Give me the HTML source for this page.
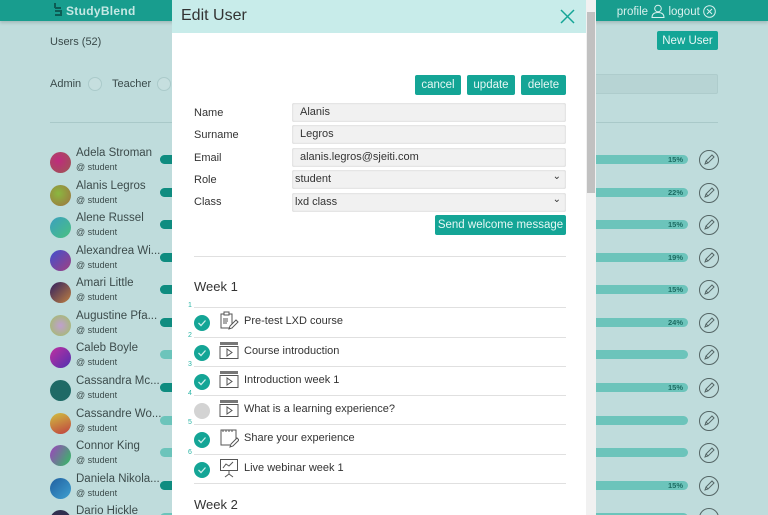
<!DOCTYPE html>
<html><head><meta charset="utf-8"><style>
*{box-sizing:border-box;margin:0;padding:0}
html,body{width:768px;height:515px;overflow:hidden}
body{background:#bfdcdc;font-family:"Liberation Sans",sans-serif;color:#3a4a4a}
#w{position:relative;width:768px;height:515px;overflow:hidden}
.hdr{position:absolute;left:0;top:0;width:768px;height:21px;background:#189d8e;box-shadow:0 2px 3px rgba(0,0,0,.15)}
.logo{position:absolute;left:66px;top:4px;color:#c5e8e4;font-weight:bold;font-size:12px;letter-spacing:.3px}
.hr{position:absolute;right:52px;top:4px;color:#d9f0ee;font-size:11.5px}
.abs{position:absolute}
.btn{background:#14a596;color:#e6f7f5;font-size:11.5px;border-radius:2px;display:flex;align-items:center;justify-content:center}
.row{position:absolute;left:50px;height:32px;width:670px}
.av{position:absolute;left:0;top:-1px;width:21px;height:21px;border-radius:50%}
.nm{position:absolute;left:26px;top:-6px;font-size:11.5px;color:#3c4b4b;white-space:nowrap}
.st{position:absolute;left:26px;top:9px;font-size:9px;color:#3c4b4b}
.bar{position:absolute;left:110px;top:2px;width:528px;height:9px;border-radius:5px;background:#6cc4bb}
.bar i{position:absolute;left:0;top:0;width:14px;height:9px;border-radius:5px 0 0 5px;background:#0f8c80}
.bar b{position:absolute;right:5px;top:0;font-size:7.5px;color:#1c6c63}
.pen{position:absolute;left:648px;top:-4px}
.modal{position:absolute;left:172px;top:0;width:414px;height:515px;background:#fff}
.mh{height:33px;background:#c8ecea;position:relative}
.mh span{position:absolute;left:9px;top:7px;font-size:16px;color:#333}
.lbl{position:absolute;left:22px;font-size:11px;color:#333}
.inp{position:absolute;left:120px;width:274px;height:19px;line-height:19px;background:#f1f1f1;border-radius:2px;box-shadow:inset 0 0 2px rgba(0,0,0,.15);font-size:11px;padding:0 8px;color:#333}
.sel{padding-left:3px}
.sel:after{content:"⌄";position:absolute;right:5px;top:-3px;font-size:10px}
.ln{position:absolute;left:22px;width:372px;height:1px;background:#e0e0e0}
.it{position:absolute;left:22px;width:372px;height:29px}
.num{position:absolute;left:-6px;top:-5px;font-size:7px;color:#2ab5a6}
.ck{position:absolute;left:0;top:8px;width:16px;height:16px;border-radius:50%;background:#14a596}
.ck.g{background:#d3d3d3}
.ic{position:absolute;left:25px;top:4px}
.tx{position:absolute;left:50px;top:8px;font-size:11px;color:#333}
</style></head><body><div id="w">
<div class="hdr"><svg class="abs" style="left:52px;top:2px" width="12" height="16"><path d="M3 1v5M3 6h6M3 9h6v4H3" stroke="#0c5c54" stroke-width="2" fill="none"/></svg><div class="logo">StudyBlend</div>
<div class="hr">profile <svg width="14" height="14" style="vertical-align:-3px"><circle cx="7" cy="4.5" r="3.3" fill="none" stroke="#d9f0ee"/><path d="M1 13.5c0-4 3-5 6-5s6 1 6 5z" fill="none" stroke="#d9f0ee"/></svg> logout <svg width="13" height="13" style="vertical-align:-3px"><circle cx="6.5" cy="6.5" r="5.8" fill="none" stroke="#d9f0ee"/><path d="M4 4l5 5M9 4l-5 5" stroke="#d9f0ee"/></svg></div></div>
<div class="abs" style="left:50px;top:36px;font-size:11px">Users (52)</div>
<div class="abs btn" style="left:657px;top:31px;width:61px;height:19px">New User</div>
<div class="abs" style="left:50px;top:78px;font-size:11px">Admin</div>
<div class="abs" style="left:88px;top:77px;width:14px;height:14px;border-radius:50%;border:1px solid #aacaca;background:#c6dfdf"></div>
<div class="abs" style="left:112px;top:78px;font-size:11px">Teacher</div>
<div class="abs" style="left:157px;top:77px;width:14px;height:14px;border-radius:50%;border:1px solid #aacaca;background:#c6dfdf"></div>
<div class="abs" style="left:586px;top:74px;width:132px;height:20px;background:#b7d4d4;border:1px solid #aecccc;border-radius:2px"></div>
<div class="abs" style="left:50px;top:122px;width:668px;height:1px;background:#a9c9c9"></div>

<div class="row" style="top:153px"><div class="av" style="background:radial-gradient(circle at 40% 40%,#c02a7e,#9a5a50)"></div><div class="nm">Adela Stroman</div><div class="st">@ student</div><div class="bar"><i></i><b>15%</b></div><svg class="pen" width="22" height="22"><circle cx="11" cy="11" r="9.5" fill="none" stroke="#566"/><path d="M7 15l1-3 6-6 2 2-6 6zM8 12l2 2" fill="none" stroke="#566"/></svg></div>
<div class="row" style="top:186px"><div class="av" style="background:radial-gradient(circle at 40% 40%,#8ab840,#a07040)"></div><div class="nm">Alanis Legros</div><div class="st">@ student</div><div class="bar"><i></i><b>22%</b></div><svg class="pen" width="22" height="22"><circle cx="11" cy="11" r="9.5" fill="none" stroke="#566"/><path d="M7 15l1-3 6-6 2 2-6 6zM8 12l2 2" fill="none" stroke="#566"/></svg></div>
<div class="row" style="top:218px"><div class="av" style="background:linear-gradient(135deg,#3aa0c0,#4ac080)"></div><div class="nm">Alene Russel</div><div class="st">@ student</div><div class="bar"><i></i><b>15%</b></div><svg class="pen" width="22" height="22"><circle cx="11" cy="11" r="9.5" fill="none" stroke="#566"/><path d="M7 15l1-3 6-6 2 2-6 6zM8 12l2 2" fill="none" stroke="#566"/></svg></div>
<div class="row" style="top:251px"><div class="av" style="background:linear-gradient(135deg,#4050d0,#a04080)"></div><div class="nm">Alexandrea Wi...</div><div class="st">@ student</div><div class="bar"><i></i><b>19%</b></div><svg class="pen" width="22" height="22"><circle cx="11" cy="11" r="9.5" fill="none" stroke="#566"/><path d="M7 15l1-3 6-6 2 2-6 6zM8 12l2 2" fill="none" stroke="#566"/></svg></div>
<div class="row" style="top:283px"><div class="av" style="background:linear-gradient(135deg,#302060,#c08040)"></div><div class="nm">Amari Little</div><div class="st">@ student</div><div class="bar"><i></i><b>15%</b></div><svg class="pen" width="22" height="22"><circle cx="11" cy="11" r="9.5" fill="none" stroke="#566"/><path d="M7 15l1-3 6-6 2 2-6 6zM8 12l2 2" fill="none" stroke="#566"/></svg></div>
<div class="row" style="top:316px"><div class="av" style="background:radial-gradient(circle,#c0a0d0,#a0c060)"></div><div class="nm">Augustine Pfa...</div><div class="st">@ student</div><div class="bar"><i></i><b>24%</b></div><svg class="pen" width="22" height="22"><circle cx="11" cy="11" r="9.5" fill="none" stroke="#566"/><path d="M7 15l1-3 6-6 2 2-6 6zM8 12l2 2" fill="none" stroke="#566"/></svg></div>
<div class="row" style="top:348px"><div class="av" style="background:linear-gradient(135deg,#c030a0,#5030b0)"></div><div class="nm">Caleb Boyle</div><div class="st">@ student</div><div class="bar"></div><svg class="pen" width="22" height="22"><circle cx="11" cy="11" r="9.5" fill="none" stroke="#566"/><path d="M7 15l1-3 6-6 2 2-6 6zM8 12l2 2" fill="none" stroke="#566"/></svg></div>
<div class="row" style="top:381px"><div class="av" style="background:#1f6a66"></div><div class="nm">Cassandra Mc...</div><div class="st">@ student</div><div class="bar"><i></i><b>15%</b></div><svg class="pen" width="22" height="22"><circle cx="11" cy="11" r="9.5" fill="none" stroke="#566"/><path d="M7 15l1-3 6-6 2 2-6 6zM8 12l2 2" fill="none" stroke="#566"/></svg></div>
<div class="row" style="top:414px"><div class="av" style="background:linear-gradient(160deg,#d0c040,#c04040)"></div><div class="nm">Cassandre Wo...</div><div class="st">@ student</div><div class="bar"></div><svg class="pen" width="22" height="22"><circle cx="11" cy="11" r="9.5" fill="none" stroke="#566"/><path d="M7 15l1-3 6-6 2 2-6 6zM8 12l2 2" fill="none" stroke="#566"/></svg></div>
<div class="row" style="top:446px"><div class="av" style="background:linear-gradient(120deg,#a040c0,#30c060)"></div><div class="nm">Connor King</div><div class="st">@ student</div><div class="bar"></div><svg class="pen" width="22" height="22"><circle cx="11" cy="11" r="9.5" fill="none" stroke="#566"/><path d="M7 15l1-3 6-6 2 2-6 6zM8 12l2 2" fill="none" stroke="#566"/></svg></div>
<div class="row" style="top:479px"><div class="av" style="background:linear-gradient(135deg,#2060a0,#40a0d0)"></div><div class="nm">Daniela Nikola...</div><div class="st">@ student</div><div class="bar"><i></i><b>15%</b></div><svg class="pen" width="22" height="22"><circle cx="11" cy="11" r="9.5" fill="none" stroke="#566"/><path d="M7 15l1-3 6-6 2 2-6 6zM8 12l2 2" fill="none" stroke="#566"/></svg></div>
<div class="row" style="top:511px"><div class="av" style="background:#303050"></div><div class="nm">Dario Hickle</div><div class="bar"></div><svg class="pen" width="22" height="22"><circle cx="11" cy="11" r="9.5" fill="none" stroke="#566"/></svg></div>

<div class="modal">
<div class="mh"><span>Edit User</span><svg class="abs" style="left:388px;top:9px" width="15" height="15"><path d="M1 1l13 13M14 1L1 14" stroke="#14a596" stroke-width="1.5"/></svg></div>
<div class="abs btn" style="left:243px;top:75px;width:46px;height:20px">cancel</div>
<div class="abs btn" style="left:295px;top:75px;width:48px;height:20px">update</div>
<div class="abs btn" style="left:349px;top:75px;width:45px;height:20px">delete</div>
<div class="lbl" style="top:107px">Name</div><div class="inp" style="top:103px">Alanis</div>
<div class="lbl" style="top:129px">Surname</div><div class="inp" style="top:125px">Legros</div>
<div class="lbl" style="top:152px">Email</div><div class="inp" style="top:148px">alanis.legros@sjeiti.com</div>
<div class="lbl" style="top:174px">Role</div><div class="inp sel" style="top:170px">student</div>
<div class="lbl" style="top:196px">Class</div><div class="inp sel" style="top:193px">lxd class</div>
<div class="abs btn" style="left:263px;top:215px;width:131px;height:20px">Send welcome message</div>
<div class="ln" style="top:256px"></div>
<div class="abs" style="left:22px;top:279px;font-size:13px;color:#333">Week 1</div>

<div class="ln" style="top:307px"></div>
<div class="it" style="top:307px"><div class="num">1</div><div class="ck"><svg width="16" height="16"><path d="M4.5 8l2.5 2.5 4.5-5" stroke="#cdeeea" fill="none" stroke-width="1.3"/></svg></div><svg class="ic" width="20" height="20"><rect x="2" y="3" width="11" height="14" fill="none" stroke="#555"/><rect x="5" y="1" width="5" height="3" fill="#fff" stroke="#555"/><path d="M4 8h5M4 10h5M4 12h4M10 18l1-3 6-6 2 2-6 6z" stroke="#555" fill="#fff"/></svg><div class="tx">Pre-test LXD course</div></div>
<div class="ln" style="top:337px"></div>
<div class="it" style="top:337px"><div class="num">2</div><div class="ck"><svg width="16" height="16"><path d="M4.5 8l2.5 2.5 4.5-5" stroke="#cdeeea" fill="none" stroke-width="1.3"/></svg></div><svg class="ic" width="20" height="20"><rect x="1" y="1" width="18" height="3" fill="#777"/><rect x="1" y="5.5" width="18" height="12" fill="none" stroke="#555"/><path d="M8 8v7l5-3.5z" fill="none" stroke="#555"/></svg><div class="tx">Course introduction</div></div>
<div class="ln" style="top:366px"></div>
<div class="it" style="top:366px"><div class="num">3</div><div class="ck"><svg width="16" height="16"><path d="M4.5 8l2.5 2.5 4.5-5" stroke="#cdeeea" fill="none" stroke-width="1.3"/></svg></div><svg class="ic" width="20" height="20"><rect x="1" y="1" width="18" height="3" fill="#777"/><rect x="1" y="5.5" width="18" height="12" fill="none" stroke="#555"/><path d="M8 8v7l5-3.5z" fill="none" stroke="#555"/></svg><div class="tx">Introduction week 1</div></div>
<div class="ln" style="top:395px"></div>
<div class="it" style="top:395px"><div class="num">4</div><div class="ck g"></div><svg class="ic" width="20" height="20"><rect x="1" y="1" width="18" height="3" fill="#777"/><rect x="1" y="5.5" width="18" height="12" fill="none" stroke="#555"/><path d="M8 8v7l5-3.5z" fill="none" stroke="#555"/></svg><div class="tx">What is a learning experience?</div></div>
<div class="ln" style="top:424px"></div>
<div class="it" style="top:424px"><div class="num">5</div><div class="ck"><svg width="16" height="16"><path d="M4.5 8l2.5 2.5 4.5-5" stroke="#cdeeea" fill="none" stroke-width="1.3"/></svg></div><svg class="ic" width="20" height="20"><path d="M11 17H2V2h15v9M4 2v2M7 2v2M10 2v2M13 2v2M11 19l1-3 6-6 2 2-6 6z" stroke="#555" fill="none"/></svg><div class="tx">Share your experience</div></div>
<div class="ln" style="top:454px"></div>
<div class="it" style="top:454px"><div class="num">6</div><div class="ck"><svg width="16" height="16"><path d="M4.5 8l2.5 2.5 4.5-5" stroke="#cdeeea" fill="none" stroke-width="1.3"/></svg></div><svg class="ic" width="20" height="20"><rect x="1.5" y="1.5" width="17" height="11" fill="none" stroke="#555"/><path d="M4 10l3-4 3 2 4-4M10 13v3M6 19l4-3 4 3" stroke="#555" fill="none"/></svg><div class="tx">Live webinar week 1</div></div>
<div class="ln" style="top:483px"></div>
<div class="abs" style="left:22px;top:497px;font-size:13px;color:#333">Week 2</div>
</div>
<div class="abs" style="left:586px;top:0;width:10px;height:515px;background:#f1f1f1"></div>
<div class="abs" style="left:587px;top:12px;width:8px;height:181px;background:#c1c1c1"></div>
</div></body></html>
